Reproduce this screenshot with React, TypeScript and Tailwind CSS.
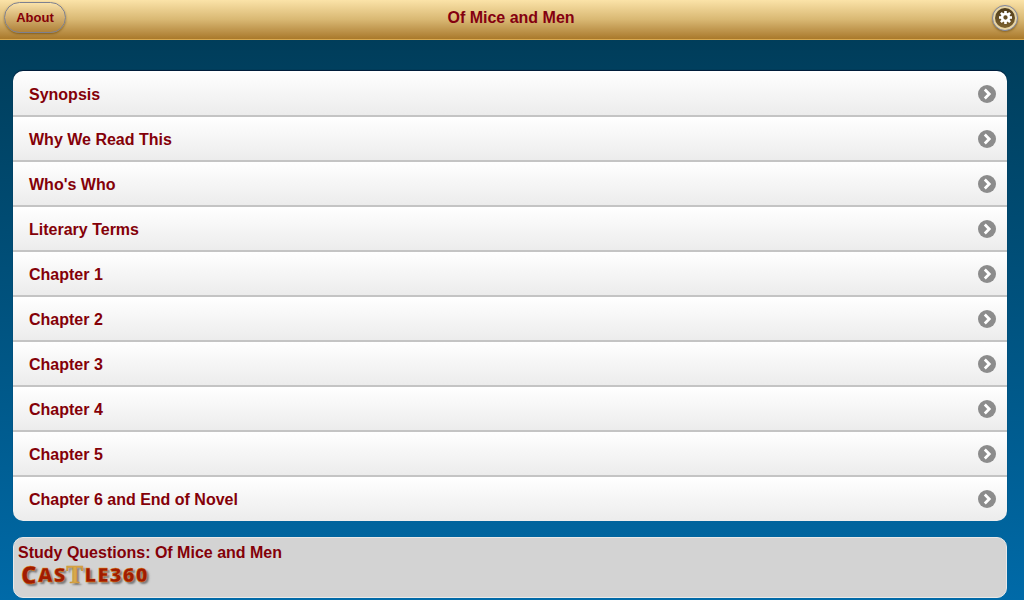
import React from "react";

const rows = ["Synopsis","Why We Read This","Who's Who","Literary Terms","Chapter 1","Chapter 2","Chapter 3","Chapter 4","Chapter 5","Chapter 6 and End of Novel"];

function Chevron() {
  return (
    <svg width="18" height="18" viewBox="0 0 18 18" className="shrink-0">
      <circle cx="9" cy="9" r="9" fill="#8c8c8c" />
      <path d="M6.8 4.6 L11.2 9 L6.8 13.4" fill="none" stroke="#fff" strokeWidth="2.8" />
    </svg>
  );
}

function Gear() {
  const teeth = [0, 45, 90, 135, 180, 225, 270, 315];
  return (
    <svg width="13" height="13" viewBox="0 0 12 12">
      {teeth.map((a) => (
        <rect key={a} x="4.8" y="0" width="2.4" height="3" fill="#fff" transform={`rotate(${a} 6 6)`} />
      ))}
      <circle cx="6" cy="6" r="3.2" fill="none" stroke="#fff" strokeWidth="2.4" />
    </svg>
  );
}

function rowClass(i: number, n: number) {
  if (i === 0) return "h-[46px] pt-[2px] border-b-2 border-[#c4c4c4]";
  if (i === n - 1) return "h-[44px]";
  return "h-[45px] pt-[1px] border-b-2 border-[#c4c4c4]";
}

export default function App() {
  return (
    <div className="w-[1024px] h-[600px] overflow-hidden flex flex-col bg-gradient-to-b from-[#003a55] to-[#006aa8] font-['Liberation_Sans',Arial,sans-serif]">
      <header className="relative h-10 shrink-0 flex items-center justify-between pl-1 pr-[6px] pb-[6px] pt-[2px] bg-gradient-to-b from-[#fbe3a8] via-[#d9b873] to-[#a9792a] border-b border-[#d8a850]">
        <button className="w-[62px] h-[31px] rounded-full border border-[#7d8090] bg-gradient-to-b from-[#f9e2a9] to-[#b08238] shadow-[0_1px_2px_rgba(90,60,0,0.55)] text-[13px] font-bold text-[#840008]">About</button>
        <h1 className="absolute left-0 right-[2px] top-[9px] text-center text-base leading-[18px] font-bold text-[#840010] pointer-events-none">Of Mice and Men</h1>
        <div className="w-[26px] h-[26px] rounded-full border border-[#7f86a0] bg-[#e8d5a5] flex items-center justify-center shadow-[0_1px_2px_rgba(90,60,0,0.5)]">
          <div className="w-[20px] h-[20px] rounded-full bg-gradient-to-b from-[#4f3c1a] to-[#7d6230] flex items-center justify-center">
            <Gear />
          </div>
        </div>
      </header>
      <main className="flex-1 flex flex-col pl-[13px] pr-[17px] pt-[31px]">
        <ul className="rounded-[10px] overflow-hidden shadow-[0_-1px_1px_rgba(0,0,30,0.6)]">
          {rows.map((r, i) => (
            <li key={r} className={`flex items-center justify-between pl-4 pr-[11px] bg-gradient-to-b from-white to-[#ececec] ${rowClass(i, rows.length)}`}>
              <span className="pt-[2px] text-base font-bold text-[#840008]">{r}</span>
              <Chevron />
            </li>
          ))}
        </ul>
        <section className="mt-4 h-[61px] rounded-[10px] bg-[#d3d3d3] border border-[#e8e8e8] pl-1 pt-[6px]">
          <p className="text-base leading-[18px] font-bold text-[#840008]">Study Questions: Of Mice and Men</p>
          <p className="pl-[3px] mt-[1px] h-[24px] flex items-center text-[20px] leading-[22px] font-extrabold tracking-[1.3px] text-[#a01c02] font-['Open_Sans',sans-serif] [-webkit-text-stroke:0.3px_#e8901a] [text-shadow:2px_2px_2px_#777]">
            <span className="text-[24px]">C</span>
            <span className="text-[20px]">AS</span>
            <span className="text-[25px] font-bold text-[#d8a84a] [-webkit-text-stroke:0.6px_#c89030] font-['Liberation_Serif',serif]">T</span>
            <span>LE360</span>
          </p>
        </section>
      </main>
    </div>
  );
}
